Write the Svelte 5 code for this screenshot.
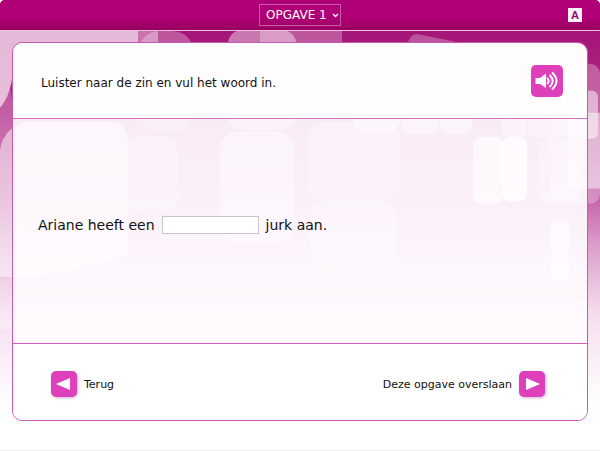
<script lang="ts">
	interface Tile {
		x: number;
		y: number;
		w: number;
		h: number;
		r: number;
		o: number;
	}

	// Loose translucent tiles in the backdrop
	const tiles: Tile[] = [
		{ x: 14, y: 20, w: 124, h: 96, r: 0, o: 0.7 },
		{ x: 138, y: 30, w: 20, h: 90, r: 0, o: 0.4 },
		{ x: 138, y: 31, w: 56, h: 101, r: 22, o: 0.28 },
		{ x: 126, y: 136, w: 52, h: 78, r: 16, o: 0.3 },
		{ x: 228, y: 30, w: 68, h: 100, r: 14, o: 0.42 },
		{ x: 260, y: 20, w: 82, h: 98, r: 6, o: 0.28 },
		{ x: 220, y: 132, w: 74, h: 112, r: 16, o: 0.45 },
		{ x: 308, y: 122, w: 92, h: 78, r: 16, o: 0.3 },
		{ x: 310, y: 201, w: 86, h: 70, r: 14, o: 0.3 },
		{ x: 354, y: 54, w: 46, h: 80, r: 12, o: 0.5 },
		{ x: 401, y: 64, w: 38, h: 71, r: 10, o: 0.5 },
		{ x: 440, y: 64, w: 32, h: 71, r: 10, o: 0.5 },
		{ x: 501, y: 80, w: 26, h: 58, r: 8, o: 0.4 },
		{ x: 528, y: 80, w: 38, h: 58, r: 8, o: 0.4 },
		{ x: 473, y: 137, w: 30, h: 67, r: 8, o: 0.7 },
		{ x: 502, y: 137, w: 25, h: 65, r: 8, o: 0.85 },
		{ x: 538, y: 140, w: 42, h: 64, r: 8, o: 0.3 },
		{ x: 551, y: 220, w: 18, h: 62, r: 6, o: 0.7 },
		{ x: 550, y: 64, w: 50, h: 140, r: 10, o: 0.28 },
		{ x: 566, y: 91, w: 32, h: 48, r: 6, o: 0.5 },
		{ x: 568, y: 113, w: 50, h: 76, r: 6, o: 0.48 }
	];

	let exercise = $state('1');
	let answer = $state('');
	let largeText = $state(false);
</script>

<svelte:head>
	<title>Opgave {exercise}</title>
</svelte:head>

<div class="page" class:large={largeText}>
	<svg class="backdrop" viewBox="0 0 600 451" preserveAspectRatio="none" aria-hidden="true">
		<defs>
			<linearGradient id="fade" x1="0" y1="0" x2="0" y2="1">
				<stop offset="0.06" stop-color="#a31476" />
				<stop offset="0.25" stop-color="#b02a86" />
				<stop offset="0.45" stop-color="#c869ad" />
				<stop offset="0.56" stop-color="#dfa5ce" />
				<stop offset="0.7" stop-color="#f5deef" />
				<stop offset="0.9" stop-color="#fff" />
			</linearGradient>
		</defs>
		<rect width="600" height="451" fill="url(#fade)" />
		{#each tiles as tile}
			<rect x={tile.x} y={tile.y} width={tile.w} height={tile.h} rx={tile.r} fill="#fff" opacity={tile.o} />
		{/each}
		<path d="M0 30H14V62Q12 96 0 108Z" fill="#fff" opacity="0.7" />
		<path d="M0 108Q8 100 10 88L14 114V128Q4 134 0 150Z" fill="#fff" opacity="0.25" />
		<path d="M408 42Q411 34 417 34L452 41L500 54V120H405Z" fill="#fff" opacity="0.26" />
		<path d="M0 150Q4 128 26 122H112Q128 124 128 144V256Q40 282 0 277Z" fill="#fff" opacity="0.62" />
		<path d="M0 277Q8 279 14 277V330H0Z" fill="#fff" opacity="0.3" />
	</svg>

	<header class="topbar">
		<select class="picker" aria-label="Opgave" bind:value={exercise}>
			<option value="1">OPGAVE 1</option>
			<option value="2">OPGAVE 2</option>
			<option value="3">OPGAVE 3</option>
		</select>
		<button class="text-size" aria-label="Lettergrootte" onclick={() => (largeText = !largeText)}>A</button>
	</header>

	<main class="panel">
		<section class="instruction">
			<p>Luister naar de zin en vul het woord in.</p>
			<button class="listen" aria-label="Luister">
				<svg viewBox="0 0 32 32" aria-hidden="true">
					<path d="M4.500 13H9l6-4.500v14.500L9 19H4.500z" fill="#fff" />
					<g fill="none" stroke="#fff" stroke-width="2">
						<path d="M16 13q3.500 3 0 6" />
						<path d="M18.500 10q6.500 6 0 12" />
						<path d="M21 7.500q9 8.500 0 17" />
					</g>
				</svg>
			</button>
		</section>

		<section class="question">
			<label for="answer">Ariane heeft een</label>
			<input id="answer" type="text" autocomplete="off" bind:value={answer} />
			<span>jurk aan.</span>
		</section>

		<nav class="controls">
			<button class="step">
				<span class="arrow">
					<svg viewBox="0 0 26 26" aria-hidden="true"><path d="M5 13L19 7V19Z" fill="#fff" /></svg>
				</span>
				Terug
			</button>
			<button class="step">
				Deze opgave overslaan
				<span class="arrow">
					<svg viewBox="0 0 26 26" aria-hidden="true"><path d="M7 7L21 13L7 19Z" fill="#fff" /></svg>
				</span>
			</button>
		</nav>
	</main>
</div>

<style>
	:global(body) {
		background: #fff;
	}

	.page {
		position: relative;
		display: flex;
		flex-direction: column;
		box-sizing: border-box;
		min-height: 100vh;
		border-bottom: 1px solid #f3f1f3;
		font-family: Verdana, 'DejaVu Sans', sans-serif;
		font-size: 12px;
		color: #111;
	}

	.backdrop {
		position: absolute;
		inset: 0;
		width: 100%;
		height: 100%;
		z-index: -1;
	}

	.topbar {
		display: grid;
		grid-template-columns: 1fr auto 1fr;
		align-items: center;
		box-sizing: border-box;
		height: 31px;
		padding: 0 18px;
		border-bottom: 1px solid #efbfe0;
		border-radius: 5px 5px 0 0;
		background: linear-gradient(#b00077 55%, #98005f);
		box-shadow: 0 0 0 5px #fff;
		clip-path: inset(0);
	}

	.picker {
		grid-column: 2;
		appearance: none;
		box-sizing: border-box;
		width: 82px;
		height: 22px;
		padding: 0 0 0 6px;
		border: 1px solid #c95aa8;
		border-radius: 0;
		background: transparent url("data:image/svg+xml,%3Csvg xmlns='http://www.w3.org/2000/svg' width='7' height='5'%3E%3Cpath d='M1 1l2.5 2.5L6 1' fill='none' stroke='white' stroke-width='1.3'/%3E%3C/svg%3E") no-repeat right 1px center;
		font: inherit;
		color: #fff;
	}

	.picker option {
		color: #111;
	}

	.text-size {
		justify-self: end;
		width: 14px;
		height: 14px;
		padding: 0;
		border: 0;
		background: #fdf0fa;
		font: bold 11px/14px 'Liberation Sans', Arial, sans-serif;
		color: #8d1269;
	}

	.panel {
		flex: 1;
		display: flex;
		flex-direction: column;
		margin: 11px 12px 29px;
		border: 1px solid #cb58b4;
		border-radius: 10px;
		overflow: hidden;
	}

	.instruction {
		display: flex;
		align-items: center;
		justify-content: space-between;
		gap: 16px;
		box-sizing: border-box;
		min-height: 76px;
		padding: 0 24px 0 28px;
		border-bottom: 1px solid #dc70c4;
		background: rgba(255, 255, 255, 0.99);
	}

	.instruction p {
		margin: 4px 0 0;
	}

	.listen {
		width: 32px;
		height: 32px;
		padding: 0;
		border: 0;
		border-radius: 5px;
		background: #de3fba;
	}

	.listen svg,
	.arrow svg {
		display: block;
		width: 100%;
		height: 100%;
	}

	.question {
		flex: 1;
		display: flex;
		align-items: center;
		gap: 7px;
		padding: 0 25px 12px;
		background: rgba(255, 252, 255, 0.92);
		font-size: 14px;
	}

	.question input {
		box-sizing: border-box;
		width: 97px;
		height: 18px;
		padding: 0 4px;
		border: 1px solid #c8c4c8;
		background: #fff;
		font: inherit;
		font-size: 12px;
	}

	.controls {
		display: flex;
		align-items: center;
		justify-content: space-between;
		gap: 16px;
		box-sizing: border-box;
		min-height: 77px;
		padding: 4px 42px 0 38px;
		border-top: 1px solid #d75cbc;
		background: #fff;
	}

	.step {
		display: flex;
		align-items: center;
		gap: 7px;
		padding: 0;
		border: 0;
		background: none;
		font: inherit;
		font-size: 11px;
		color: inherit;
	}

	.arrow {
		width: 26px;
		height: 26px;
		border-radius: 5px;
		background: #de3fba;
		box-shadow: 1px 1px 3px rgba(120, 40, 100, 0.35);
	}

	.large {
		font-size: 14px;
	}

	.large .question {
		font-size: 18px;
	}

	.large .step {
		font-size: 13px;
	}

	.page button,
	.page select {
		cursor: pointer;
	}
</style>
